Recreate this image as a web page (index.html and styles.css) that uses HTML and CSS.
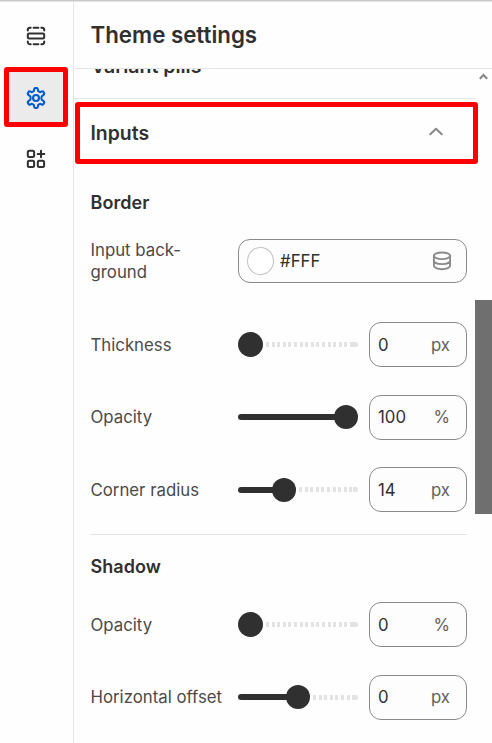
FILE: index.html
```html
<!DOCTYPE html>
<html lang="en">
<head>
<meta charset="utf-8">
<title>Theme settings</title>
<link rel="stylesheet" href="styles.css">
</head>
<body>
<div class="app">
  <nav class="rail">
    <div class="rail-item">
      <svg class="rail-icon" viewBox="0 0 20 20"><rect x="1.800" y="7.400" width="16.400" height="5.200" rx="1.400"/><path d="M1.800 4.600V4a2.300 2.300 0 0 1 2.300-2.300h.6M7.600 1.700h4.800M15.300 1.700h.6A2.300 2.300 0 0 1 18.200 4v.6M1.800 15.400v.6a2.300 2.300 0 0 0 2.300 2.300h.6M7.600 18.300h4.800M15.300 18.300h.6a2.300 2.300 0 0 0 2.300-2.300v-.6"/></svg>
    </div>
    <div class="rail-item active">
      <svg class="rail-icon gear" viewBox="0 0 20 20"><path d="M8.300 2.100Q8.500.9 9.500.9h1q1 0 1.200 1.200l.3 1.700 1.600.9 1.600-.6q1.100-.4 1.600.5l.5.900q.5.900-.4 1.600L15.500 8.200q-.6.500-.6 1.800t.6 1.800l1.400 1.100q.9.700.4 1.600l-.5.900q-.5.900-1.600.5l-1.600-.6-1.600.9-.3 1.700q-.2 1.200-1.200 1.200h-1q-1 0-1.200-1.200l-.3-1.700-1.600-.9-1.600.6q-1.100.4-1.600-.5l-.5-.9q-.5-.9.400-1.600l1.400-1.100q.6-.5.600-1.800t-.6-1.800L3.100 7.100q-.9-.7-.4-1.600l.5-.9q.5-.9 1.600-.5l1.600.6 1.600-.9z"/><circle cx="10" cy="10" r="2.700"/></svg>
    </div>
    <div class="rail-item">
      <svg class="rail-icon" viewBox="0 0 20 20"><rect x="1.800" y="1.800" width="6.300" height="6.300" rx="1.500"/><rect x="1.800" y="11.800" width="6.300" height="6.300" rx="1.500"/><rect x="11.800" y="11.800" width="6.300" height="6.300" rx="1.500"/><path d="M15 1.700v6.600M11.700 5h6.600"/></svg>
    </div>
  </nav>
  <main class="panel">
    <header class="panel-header">Theme settings</header>
    <div class="scroller">
      <div class="content">
        <div class="previous"><span>Variant pills</span></div>
        <div class="accordion">
          <span>Inputs</span>
          <svg class="chevron" viewBox="0 0 14 9"><path d="M1.200 7.300 7 1.700l5.800 5.600"/></svg>
        </div>
        <section class="group">
          <h2>Border</h2>
          <div class="row color-row">
            <label>Input back-<br>ground</label>
            <div class="field color"><i class="swatch"></i><span>#FFF</span>
              <svg class="database" viewBox="0 0 20 20"><ellipse cx="10" cy="4.800" rx="8.100" ry="3.300"/><path d="M1.900 4.800v10c0 1.900 3.600 3.400 8.100 3.400s8.100-1.500 8.100-3.400v-10M1.900 9.800c0 1.900 3.600 3.300 8.100 3.300s8.100-1.400 8.100-3.300"/></svg>
            </div>
          </div>
          <div class="row"><label>Thickness</label><div class="slider"><i class="knob"></i><i class="ticks"></i></div><div class="field number"><span>0</span><span class="unit">px</span></div></div>
          <div class="row"><label>Opacity</label><div class="slider"><i class="fill" style="width:100px"></i><i class="knob"></i></div><div class="field number"><span>100</span><span class="unit">%</span></div></div>
          <div class="row"><label>Corner radius</label><div class="slider"><i class="fill" style="width:38px"></i><i class="knob"></i><i class="ticks"></i></div><div class="field number"><span>14</span><span class="unit">px</span></div></div>
        </section>
        <section class="group shadow">
          <h2>Shadow</h2>
          <div class="row"><label>Opacity</label><div class="slider"><i class="knob"></i><i class="ticks"></i></div><div class="field number"><span>0</span><span class="unit">%</span></div></div>
          <div class="row"><label>Horizontal offset</label><div class="slider"><i class="fill" style="width:52px"></i><i class="knob"></i><i class="ticks"></i></div><div class="field number"><span>0</span><span class="unit">px</span></div></div>
        </section>
      </div>
      <div class="scrollbar">
        <svg class="scroll-up" viewBox="0 0 9 7"><path d="M.8 5.700 4.500 2l3.700 3.700"/></svg>
        <div class="thumb"></div>
      </div>
    </div>
  </main>
</div>
</body>
</html>
```
FILE: styles.css
```css
* { box-sizing: border-box; }
body { margin: 0; background: #fefefe; font-family: Inter, sans-serif; color: #303030; overflow: hidden; }
.app { display: flex; width: 492px; height: 743px; border-top: 1px solid #c9c9c9; box-shadow: inset 0 1px #e4e4e4; padding-top: 1px; }
svg { fill: none; stroke: currentColor; stroke-linecap: round; stroke-linejoin: round; flex: none; }
.rail { width: 74px; flex: none; border-right: 1px solid #e6e6e6; padding: 3px 0 0 4px; }
.rail-item { width: 64px; height: 60px; display: flex; align-items: center; justify-content: center; margin-bottom: 2px; padding-top: 2px; }
.rail-item:last-child { padding-top: 0; margin-top: 2px; }
.rail-item.active { color: #005bd3; background: #ebebeb; border: 5px solid #f00; border-radius: 3px; }
.rail-icon { width: 20px; height: 20px; stroke-width: 2; }
.rail-icon.gear { width: 22px; height: 22px; stroke-width: 1.900; }
.panel { flex: 1; min-width: 0; }
.panel-header { height: 67px; border-bottom: 1px solid #e6e6e6; padding-left: 16.500px; font-size: 22.300px; font-weight: 600; line-height: 65px; }
.scroller { display: flex; height: 674px; overflow: hidden; }
.content { width: 401px; flex: none; }
.previous { height: 30px; border-bottom: 1px solid #e6e6e6; padding-left: 17px; overflow: hidden; font-size: 19.500px; font-weight: 600; line-height: 24px; }
.previous span { display: block; margin-top: -15px; }
.accordion { width: 403px; height: 62px; margin: 3px 0 0 1px; border: 5px solid #f00; border-radius: 3px; padding: 0 30px 0 10.500px; display: flex; align-items: center; justify-content: space-between; font-size: 19.400px; line-height: 24px; font-weight: 600; }
.accordion span { padding-bottom: 1px; }
.chevron { width: 14px; height: 9px; stroke: #8a8a8a; stroke-width: 2; margin-top: -3px; }
.group { width: 377px; margin-left: 16px; }
h2 { margin: 0; padding-left: .5px; font-size: 18px; letter-spacing: .05px; line-height: 24px; font-weight: 600; }
.group:not(.shadow) h2 { padding-top: 27px; }
.row { display: flex; align-items: center; height: 45px; margin-bottom: 27.700px; }
.color-row { height: 44px; margin: 24px 0 39px; }
.row label { width: 148px; flex: none; padding-left: .5px; font-size: 16.800px; line-height: 22px; color: #4a4a4a; white-space: nowrap; }
.field { border: 1px solid #8a8a8a; border-radius: 12px; background: #fdfdfd; display: flex; align-items: center; font-size: 16.800px; }
.color { width: 229px; height: 44px; padding: 0 14px 0 8px; }
.swatch { width: 27px; height: 28px; border: 1.500px solid #c0c0c0; border-radius: 50%; margin-right: 6px; background: #fff; }
.database { width: 20px; height: 20px; color: #8a8a8a; stroke-width: 1.900; margin-left: auto; }
.number { width: 98px; height: 45px; margin-left: 11px; padding: 0 16px 0 8px; justify-content: space-between; }
.unit { color: #616161; }
.slider { width: 120px; display: flex; align-items: center; }
.fill { height: 6px; background: #303030; border-radius: 3px 0 0 3px; margin-right: -4px; }
.knob { width: 25px; height: 25px; border-radius: 50%; background: #303030; flex: none; }
.fill + .knob { width: 24px; height: 24px; }
.ticks { flex: 1; height: 5px; margin-left: 3px; border-radius: 0 3px 3px 0; background: linear-gradient(#e3e3e3, #e3e3e3) right / 5px 100% no-repeat, repeating-linear-gradient(to right, #e3e3e3 0 3px, transparent 3px 5.600px); }
.shadow { border-top: 1px solid #e3e3e3; margin-top: -6px; padding-top: 20px; }
.shadow h2 { margin-bottom: 23px; }
.scrollbar { width: 17px; flex: none; }
.scroll-up { display: block; width: 9px; height: 7px; stroke: #858585; stroke-width: 2; stroke-linecap: butt; stroke-linejoin: miter; margin: 4px 0 0 4px; }
.thumb { height: 214px; background: #6f6f6f; margin-top: 220px; }
```
